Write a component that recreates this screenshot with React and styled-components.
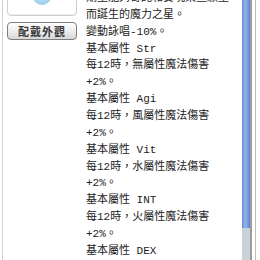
import styled, { createGlobalStyle } from "styled-components";

const GlobalStyle = createGlobalStyle`
  html, body {
    margin: 0;
    padding: 0;
    background: #ffffff;
  }
`;

// Description lines as shown in the scrolled pane
const lines = [
  "期望能夠寄託和實現某些願望",
  "而誕生的魔力之星。",
  "變動詠唱-10%。",
  "基本屬性 Str",
  "每12時，無屬性魔法傷害",
  "+2%。",
  "基本屬性 Agi",
  "每12時，風屬性魔法傷害",
  "+2%。",
  "基本屬性 Vit",
  "每12時，水屬性魔法傷害",
  "+2%。",
  "基本屬性 INT",
  "每12時，火屬性魔法傷害",
  "+2%。",
  "基本屬性 DEX",
];

const App = () => {
  return (
    <>
      <GlobalStyle />
      <Page>
        <Sidebar>
          <Preview>
            <Gem />
          </Preview>
          <WearButton>配戴外觀</WearButton>
        </Sidebar>

        <TextPane>
          <Lines>
            {lines.map((line, index) => (
              <Line key={index}>{line}</Line>
            ))}
          </Lines>
        </TextPane>

        <Scrollbar>
          <Thumb />
          <Track />
        </Scrollbar>

        <Edge />
      </Page>
    </>
  );
};

export default App;

const Page = styled.div`
  display: flex;
  width: 260px;
  height: 260px;
  overflow: hidden;
  background: #ffffff;
`;

const Sidebar = styled.div`
  display: flex;
  flex-direction: column;
  flex: 0 0 auto;
  width: 70px;
  margin-left: 2px;
  padding: 0 3px 0 4px;
  border-left: 1px solid #d2d2d2;
`;

const Preview = styled.div`
  display: flex;
  align-items: flex-end;
  justify-content: center;
  height: 54px;
  margin-top: -50px;
  padding-bottom: 10px;
  border: 1px solid #cfcfcf;
  border-radius: 4px;
  background: #ffffff;
  box-shadow: inset 0 -1px 0 #ededed;
`;

const Gem = styled.div`
  width: 18px;
  height: 18px;
  border-radius: 50%;
  background: radial-gradient(circle at 50% 40%, #d6eefa 0%, #a4d4f0 60%, #7fbfe6 100%);
`;

const WearButton = styled.button`
  display: flex;
  align-items: center;
  justify-content: center;
  width: 70px;
  height: 18px;
  margin-top: 6px;
  padding: 0;
  border: 1px solid #7e7e7e;
  border-radius: 4px;
  background: linear-gradient(#ffffff, #ececec 55%, #d6d6d6);
  color: #3a3a3a;
  font-family: "Noto Sans CJK TC", sans-serif;
  font-size: 11px;
  font-weight: 700;
  letter-spacing: 1px;
  line-height: 1;
`;

const TextPane = styled.div`
  flex: 1 1 auto;
  min-width: 0;
  padding-left: 6px;
  overflow: hidden;
`;

const Lines = styled.div`
  margin-top: -10px;
`;

const Line = styled.div`
  height: 16.86px;
  line-height: 16.86px;
  white-space: nowrap;
  color: #1c1c1c;
  font-family: "Liberation Mono", "Noto Sans CJK TC", monospace;
  font-size: 11px;
`;

const Scrollbar = styled.div`
  display: flex;
  flex-direction: column;
  flex: 0 0 auto;
  width: 8px;
  border-right: 2px solid #9c9c9c;
`;

const Thumb = styled.div`
  height: 228px;
  background: linear-gradient(to right, #5f87d6, #93b3ec 35%, #809fe0 70%, #5a80d0);
`;

const Track = styled.div`
  flex: 1;
  background: #c8d2d8;
`;

const Edge = styled.div`
  flex: 0 0 auto;
  width: 4px;
  margin-left: 3px;
  border-left: 1px solid #bdbdbd;
`;
